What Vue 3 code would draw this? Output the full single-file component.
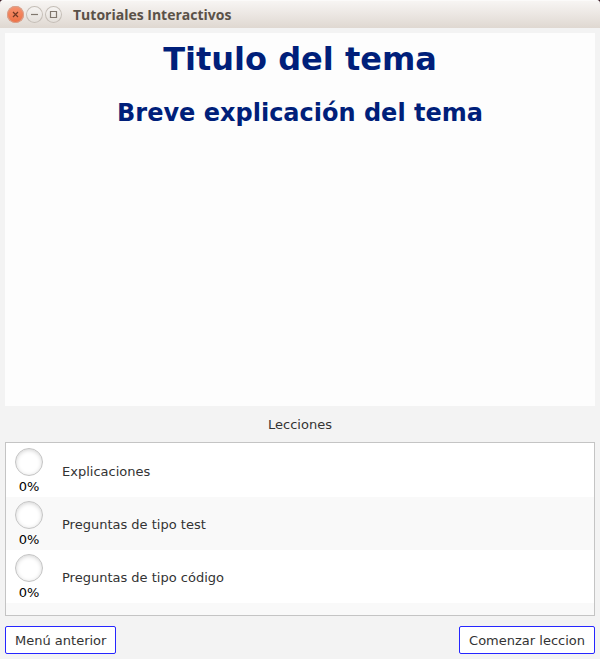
<script setup>
const lessons = [
  { name: 'Explicaciones', progress: 0 },
  { name: 'Preguntas de tipo test', progress: 0 },
  { name: 'Preguntas de tipo código', progress: 0 },
]
</script>

<template>
  <div class="window">
    <header class="titlebar">
      <button class="control close" type="button" aria-label="Cerrar">
        <svg viewBox="0 0 17 17"><path d="M6 6l5 5M11 6l-5 5" /></svg>
      </button>
      <button class="control" type="button" aria-label="Minimizar">
        <svg viewBox="0 0 17 17"><path d="M5 8.5h7" /></svg>
      </button>
      <button class="control" type="button" aria-label="Maximizar">
        <svg viewBox="0 0 17 17"><path d="M5.5 5.5h6v6h-6z" /></svg>
      </button>
      <span class="caption">Tutoriales Interactivos</span>
    </header>

    <main class="content">
      <section class="topic">
        <h1>Titulo del tema</h1>
        <h2>Breve explicación del tema</h2>
      </section>

      <h3 id="lessons-label">Lecciones</h3>

      <ul class="lessons" aria-labelledby="lessons-label">
        <li v-for="lesson in lessons" :key="lesson.name">
          <div class="progress">
            <span class="dial"></span>
            <span class="percent">{{ lesson.progress }}%</span>
          </div>
          <span class="name">{{ lesson.name }}</span>
        </li>
        <li class="empty" aria-hidden="true"></li>
      </ul>

      <footer class="actions">
        <button class="action" type="button">Menú anterior</button>
        <button class="action" type="button">Comenzar leccion</button>
      </footer>
    </main>
  </div>
</template>

<style>
body {
  margin: 0;
  background: #f3f3f3;
}
</style>

<style scoped>
.window {
  box-sizing: border-box;
  min-height: 100vh;
  display: flex;
  flex-direction: column;
  background: #40202a;
  color: #333;
  font: 13px/16px "DejaVu Sans", sans-serif;
}

.titlebar {
  box-sizing: border-box;
  height: 28px;
  display: flex;
  align-items: center;
  gap: 2px;
  padding: 1px 7px 0;
  border-radius: 4px 4px 0 0;
  background: linear-gradient(#f8f6f4, #ece7e3 50%, #dfd8d1);
  box-shadow: inset 0 1px #fbfaf9;
}

.control {
  box-sizing: border-box;
  width: 17px;
  height: 17px;
  flex: none;
  padding: 0;
  border: 0;
  border-radius: 50%;
  background: linear-gradient(#f7f5f3, #e4dfda);
  box-shadow: inset 0 0 0 1px #c5beb7;
  color: #80776e;
}

.control svg {
  display: block;
  width: 17px;
  height: 17px;
  fill: none;
  stroke: currentColor;
  stroke-width: 1.2;
}

.close {
  background: linear-gradient(#f79370, #ed6f43);
  box-shadow: inset 0 0 0 1px #d5a28f;
  color: #713823;
}

.caption {
  padding-left: 9px;
  color: #5a5148;
  font: bold 14px/20px "Open Sans", sans-serif;
}

.content {
  flex: 1;
  display: flex;
  flex-direction: column;
  padding: 5px;
  background: #f3f3f3;
}

.topic {
  flex: 1;
  background: #fdfdfd;
  color: #001f7a;
  text-align: center;
}

h1 {
  margin: 7px 0 0;
  font-size: 32px;
  line-height: 38px;
}

h2 {
  margin: 20px 0 0;
  font-size: 24px;
  line-height: 30px;
}

h3 {
  margin: 0;
  padding-top: 2px;
  font-size: 13px;
  font-weight: normal;
  line-height: 34px;
  text-align: center;
}

.lessons {
  margin: 0;
  padding: 1px 0 0;
  border: 1px solid #c4c4c4;
  background: #fff;
  list-style: none;
}

.lessons li {
  box-sizing: border-box;
  height: 53px;
  display: flex;
  align-items: center;
  padding: 2px 9px 0;
}

.lessons li:nth-child(even) {
  background: #f9f9f9;
}

.lessons .empty {
  height: 12px;
}

.progress {
  display: flex;
  flex-direction: column;
  align-items: center;
  gap: 3px;
  width: 28px;
  margin-right: 19px;
}

.dial {
  box-sizing: border-box;
  width: 28px;
  height: 28px;
  border: 1px solid #c4c4c4;
  border-radius: 50%;
  background: #fff;
  box-shadow: inset 0 1px 4px rgba(0, 0, 0, 0.18);
}

.percent {
  color: #000;
}

.actions {
  display: flex;
  justify-content: space-between;
  padding-top: 10px;
}

.action {
  box-sizing: border-box;
  height: 28px;
  padding: 2px 9px 0;
  border: 1px solid #2626ff;
  border-radius: 2px;
  background: #fff;
  color: #333;
  font: 13px/16px "DejaVu Sans", sans-serif;
}
</style>
